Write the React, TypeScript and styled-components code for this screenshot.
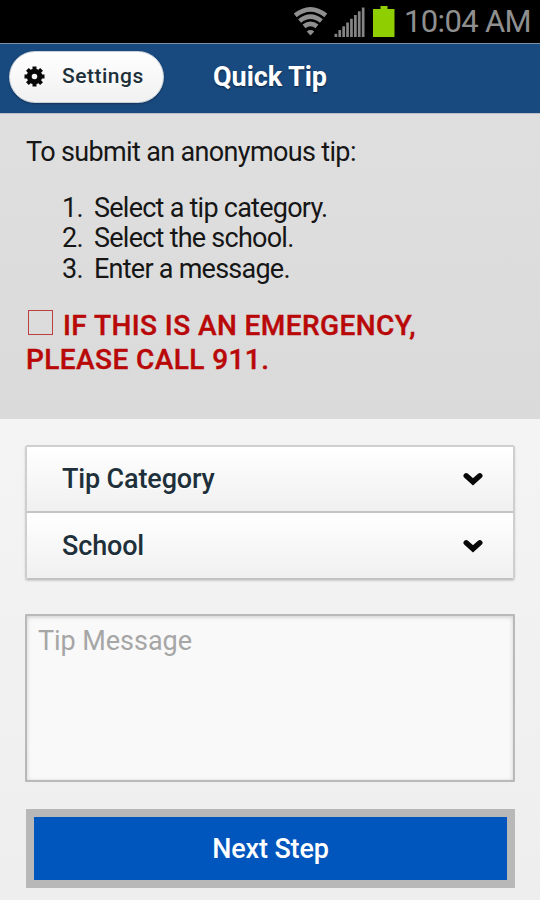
import React from "react";
import styled, { createGlobalStyle } from "styled-components";

const GlobalStyle = createGlobalStyle`
  * { box-sizing: border-box; }
  body { margin: 0; background: #f0f0f0; font-family: Roboto, "Liberation Sans", sans-serif; }
  button, textarea { font-family: inherit; }
`;

const Screen = styled.div`
  width: 540px;
  height: 900px;
  overflow: hidden;
  display: flex;
  flex-direction: column;
  background: linear-gradient(#f4f4f4 418px, #eeeeee);
`;

const StatusBar = styled.div`
  height: 43px;
  flex: none;
  display: flex;
  justify-content: flex-end;
  align-items: flex-start;
  background: #000;
  padding-right: 9px;
`;

const StatusIcons = styled.svg`
  width: 110px;
  height: 42px;
`;

const Clock = styled.span`
  width: 127px;
  margin-left: 9px;
  font-size: 31px;
  line-height: 43px;
  letter-spacing: -0.65px;
  color: #8f8f8f;
  white-space: nowrap;
`;

const Header = styled.header`
  height: 70px;
  flex: none;
  display: grid;
  grid-template-columns: 155px 1fr;
  column-gap: 49px;
  align-items: start;
  padding: 7px 9px 0;
  background: #194a7f;
  border-top: 1px solid #7f91a5;
`;

const SettingsButton = styled.button`
  height: 52px;
  display: flex;
  align-items: center;
  gap: 17px;
  padding: 0 0 2px 14px;
  border: 1px solid #c9d0d8;
  border-radius: 26px;
  background: linear-gradient(#ffffff, #f1f1f1);
  box-shadow: 0 1px 2px rgba(0, 0, 0, 0.3);
  color: #20303a;
  font-size: 21px;
  font-weight: 500;
  letter-spacing: 0.5px;
  text-shadow: 0 1px 0 #fff;
`;

const Title = styled.h1`
  margin: 0;
  font-size: 27px;
  line-height: 53px;
  font-weight: 700;
  letter-spacing: -0.05px;
  color: #fff;
  text-shadow: 0 1px 2px rgba(0, 0, 0, 0.5);
`;

const Intro = styled.section`
  height: 306px;
  flex: none;
  padding: 23px 26px 0;
  background: linear-gradient(#dfdfdf, #dadada);
  border-top: 1px solid #b9bec4;
  color: #161616;
  font-size: 27px;
  line-height: 30px;
  letter-spacing: -0.65px;
`;

const Lead = styled.p`
  margin: 0 0 26px;
`;

const Steps = styled.ol`
  margin: 0;
  padding: 0 0 0 36px;
  line-height: 30.4px;
  list-style: none;
`;

const Step = styled.li`
  display: grid;
  grid-template-columns: 32px 1fr;
  letter-spacing: -0.75px;
`;

const Warning = styled.p`
  margin: 25px 0 0;
  color: #b90808;
  font-size: 28px;
  font-weight: 500;
  line-height: 34px;
  letter-spacing: 0.42px;
  -webkit-text-stroke: 0.4px #b90808;
`;

const CheckSquare = styled.span`
  display: inline-block;
  width: 25px;
  height: 25px;
  margin: 0 10px 0 2px;
  border: 1px solid #bd4040;
`;

const Form = styled.form`
  padding: 26px 25px 0;
`;

const SelectGroup = styled.div`
  border: 2px solid #cfcfcf;
  border-bottom-color: #c2c2c2;
  border-radius: 3px;
  box-shadow: 0 1px 2px rgba(0, 0, 0, 0.15);
`;

const SelectRow = styled.div`
  height: 64px;
  display: flex;
  align-items: center;
  justify-content: space-between;
  padding: 0 30px 0 35px;
  background: linear-gradient(#ffffff, #f0f0f0);
  color: #20303a;
  font-size: 27px;
  font-weight: 500;
  letter-spacing: -0.15px;
  text-shadow: 0 1px 0 #fff;
  & + & { height: 67px; border-top: 2px solid #c4c4c4; }
`;

const Chevron = styled.svg`
  width: 20px;
  height: 14px;
`;

const Message = styled.textarea`
  display: block;
  width: 100%;
  height: 168px;
  margin-top: 34px;
  padding: 9px 11px;
  border: 2px solid #b9b9b9;
  border-radius: 1px;
  outline: 0;
  resize: none;
  background: #f9f9f9;
  box-shadow: inset 0 1px 4px rgba(0, 0, 0, 0.18);
  font-size: 27px;
  line-height: 32px;
  letter-spacing: -0.05px;
  &::placeholder { color: #a6a6a6; opacity: 1; }
`;

const NextButton = styled.button`
  display: block;
  width: 489px;
  height: 79px;
  margin: 27px 0 0 1px;
  padding: 0;
  border: 8px solid #b8b8b8;
  background: #0056bd;
  color: #fff;
  font-size: 27px;
  font-weight: 500;
  letter-spacing: -0.15px;
`;

const DownArrow = () => (
  <Chevron viewBox="0 0 20 14">
    <path d="M3.2 3.8 L10 9.8 L16.8 3.8" fill="none" stroke="#080808" strokeWidth="5.4" strokeLinecap="round" />
  </Chevron>
);

const GEAR_ANGLES = [0, 45, 90, 135];
const SIGNAL_BARS = [0, 1, 2, 3, 4, 5, 6, 7];

const Gear = () => (
  <svg width="21" height="21" viewBox="-10.5 -10.5 21 21">
    <circle r="5.3" fill="none" stroke="#080808" strokeWidth="5" />
    {GEAR_ANGLES.map((a) => (
      <path key={a} d="M0 -10 V-6 M0 6 V10" stroke="#080808" strokeWidth="4" transform={`rotate(${a})`} />
    ))}
  </svg>
);

const steps = ["Select a tip category.", "Select the school.", "Enter a message."];

export default function App() {
  return (
    <>
      <GlobalStyle />
      <Screen>
        <StatusBar>
          <StatusIcons viewBox="285 0 110 42">
            <g fill="none" stroke="#8f8f8f" strokeWidth="4.6">
              <path d="M295.2 15.4 Q310.5 3.2 325.8 15.4" />
              <path d="M299.6 21 Q310.5 12.4 321.4 21" />
              <path d="M304 26.4 Q310.5 21.2 317 26.4" />
            </g>
            <path d="M306.8 31.4 Q310.5 28.8 314.2 31.4 L310.5 35.5Z" fill="#8f8f8f" />
            {SIGNAL_BARS.map((i) => (
              <rect key={i} x={334.5 + i * 3.9} y={33.8 - i * 3.75} width="2.7" height={3.2 + i * 3.75} fill="#858585" />
            ))}
            <path d="M373 9 H380.5 V6 H387.5 V9 H394.5 V37 H373Z" fill="#8fce00" />
          </StatusIcons>
          <Clock>10:04 AM</Clock>
        </StatusBar>
        <Header>
          <SettingsButton type="button">
            <Gear />
            Settings
          </SettingsButton>
          <Title>Quick Tip</Title>
        </Header>
        <Intro>
          <Lead>To submit an anonymous tip:</Lead>
          <Steps>
            {steps.map((text, i) => (
              <Step key={text}>
                <span>{i + 1}.</span>
                <span>{text}</span>
              </Step>
            ))}
          </Steps>
          <Warning>
            <CheckSquare />
            IF THIS IS AN EMERGENCY,
            <br />
            PLEASE CALL 911.
          </Warning>
        </Intro>
        <Form>
          <SelectGroup>
            <SelectRow>
              Tip Category
              <DownArrow />
            </SelectRow>
            <SelectRow>
              School
              <DownArrow />
            </SelectRow>
          </SelectGroup>
          <Message placeholder="Tip Message" />
          <NextButton type="button">Next Step</NextButton>
        </Form>
      </Screen>
    </>
  );
}
